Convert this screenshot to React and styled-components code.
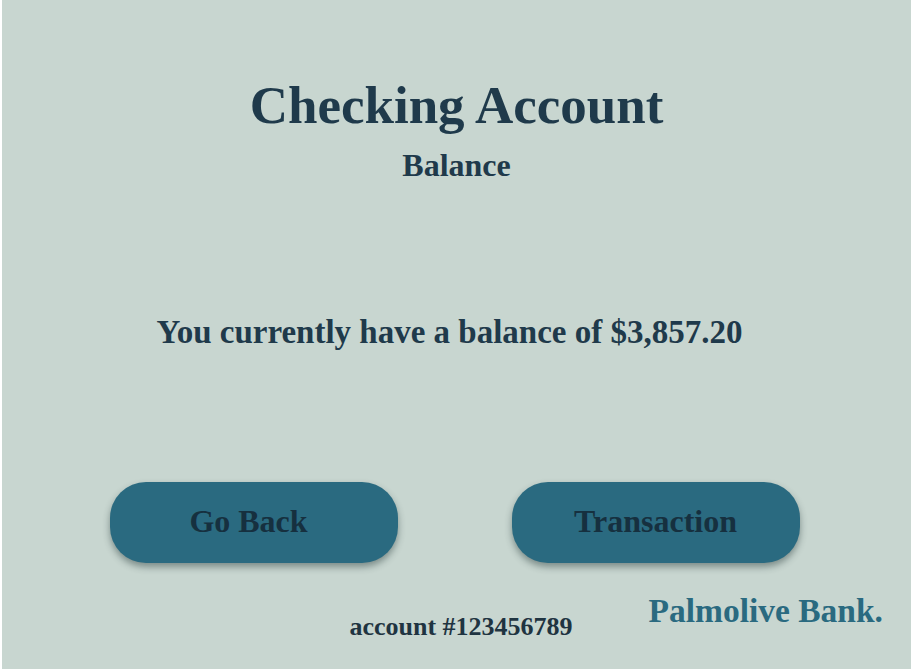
import React from "react";
import styled, { createGlobalStyle } from "styled-components";

const GlobalStyle = createGlobalStyle`
  html, body {
    margin: 0;
    padding: 0;
    background: #ffffff;
  }
  body {
    font-family: "Liberation Serif", "Times New Roman", serif;
  }
`;

const Screen = styled.main`
  box-sizing: border-box;
  width: 909px;
  height: 669px;
  margin: 0 2px;
  background: #c8d6d0;
  display: flex;
  flex-direction: column;
  align-items: center;
  padding-top: 74px;
  color: #1f3a4b;
  font-weight: 700;
  line-height: 1.2;
`;

const Title = styled.h1`
  margin: 0;
  font-size: 53px;
  font-weight: 700;
  line-height: 1.2;
`;

const Subtitle = styled.h2`
  margin: 8px 0 0;
  font-size: 32px;
  font-weight: 700;
  line-height: 1.2;
`;

const Message = styled.p`
  margin: 129px 0 0;
  margin-right: 14px;
  font-size: 33px;
  line-height: 1.2;
`;

const ButtonRow = styled.div`
  display: flex;
  gap: 114px;
  margin-top: 129px;
  margin-right: 4px;
`;

const ActionButton = styled.button`
  box-sizing: border-box;
  width: 288px;
  height: 81px;
  border: none;
  border-radius: 36px;
  background: #2a6a80;
  color: #16303f;
  font-family: inherit;
  font-weight: 700;
  font-size: 32px;
  box-shadow: 0 4px 7px rgba(30, 50, 50, 0.45);
  display: flex;
  align-items: center;
  justify-content: center;
  padding: 0 ${(p) => p.$nudge || 0}px 1px 0;
  cursor: pointer;
`;

const Footer = styled.footer`
  align-self: stretch;
  display: grid;
  grid-template-columns: 1fr auto 1fr;
  align-items: start;
  margin-top: 28px;
  padding: 0 28px 0 0;
`;

const AccountNo = styled.span`
  grid-column: 2;
  margin-top: 20px;
  margin-left: 37px;
  font-size: 26px;
  color: #1f3441;
`;

const Brand = styled.span`
  grid-column: 3;
  justify-self: end;
  font-size: 33.5px;
  color: #2a6a80;
`;

export default function App() {
  return (
    <>
      <GlobalStyle />
      <Screen>
        <Title>Checking Account</Title>
        <Subtitle>Balance</Subtitle>
        <Message>You currently have a balance of $3,857.20</Message>
        <ButtonRow>
          <ActionButton $nudge={10}>Go Back</ActionButton>
          <ActionButton>Transaction</ActionButton>
        </ButtonRow>
        <Footer>
          <AccountNo>account #123456789</AccountNo>
          <Brand>Palmolive Bank.</Brand>
        </Footer>
      </Screen>
    </>
  );
}
